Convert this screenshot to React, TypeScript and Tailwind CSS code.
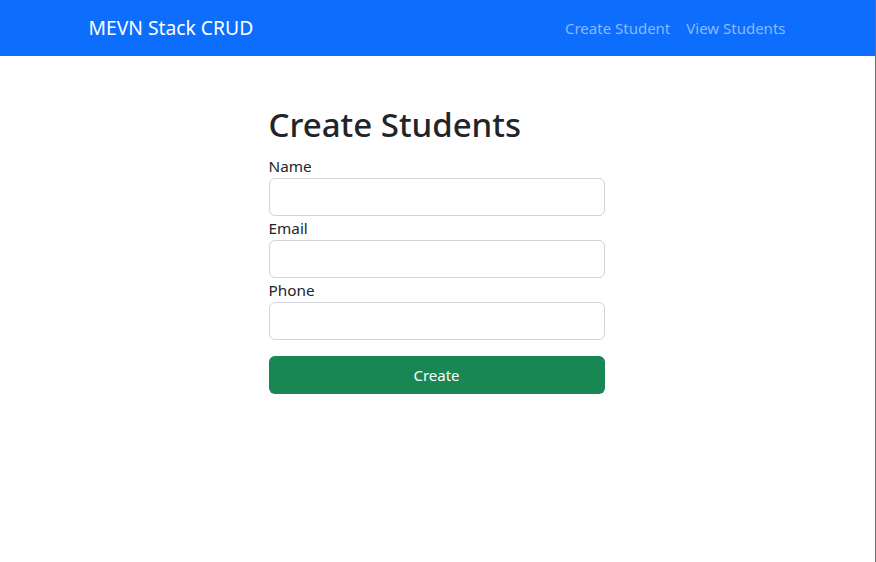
export default function App() {
  return (
    <div
      className="min-h-[562px] w-[876px] bg-white border-r border-[#6b6b6b] text-[#212529]"
      style={{ fontFamily: '"Segoe UI", "Noto Sans", "Open Sans", sans-serif' }}
    >
      {/* Navbar */}
      <nav className="h-[56px] bg-[#0d6efd]">
        <div className="mx-auto flex h-full w-[720px] items-center justify-between pl-[11px] pr-3">
          <a href="#" className="text-[19.3px] text-white">
            MEVN Stack CRUD
          </a>
          <div className="flex gap-4 text-[15px] text-[#8bb8fe]">
            <a href="#">Create Student</a>
            <a href="#">View Students</a>
          </div>
        </div>
      </nav>

      {/* Form */}
      <div className="mx-auto w-[720px] pt-[42px]">
        <div className="mx-auto w-[360px] pl-[11px] pr-[13px]">
          <h1 className="mb-2 pt-[6px] text-[33px] font-medium leading-[42px]">Create Students</h1>
          <form onSubmit={(e) => e.preventDefault()}>
            <label className="block text-[15.3px] leading-[24px]">Name</label>
            <input className="block h-[38px] w-full rounded-[6px] border border-[#ced4da] px-3" />
            <label className="block text-[15.3px] leading-[24px]">Email</label>
            <input className="block h-[38px] w-full rounded-[6px] border border-[#ced4da] px-3" />
            <label className="block text-[15.3px] leading-[24px]">Phone</label>
            <input className="block h-[38px] w-full rounded-[6px] border border-[#ced4da] px-3" />
            <button className="mt-4 block h-[38px] w-full rounded-[6px] bg-[#198754] text-[15px] text-white">
              Create
            </button>
          </form>
        </div>
      </div>
    </div>
  )
}
